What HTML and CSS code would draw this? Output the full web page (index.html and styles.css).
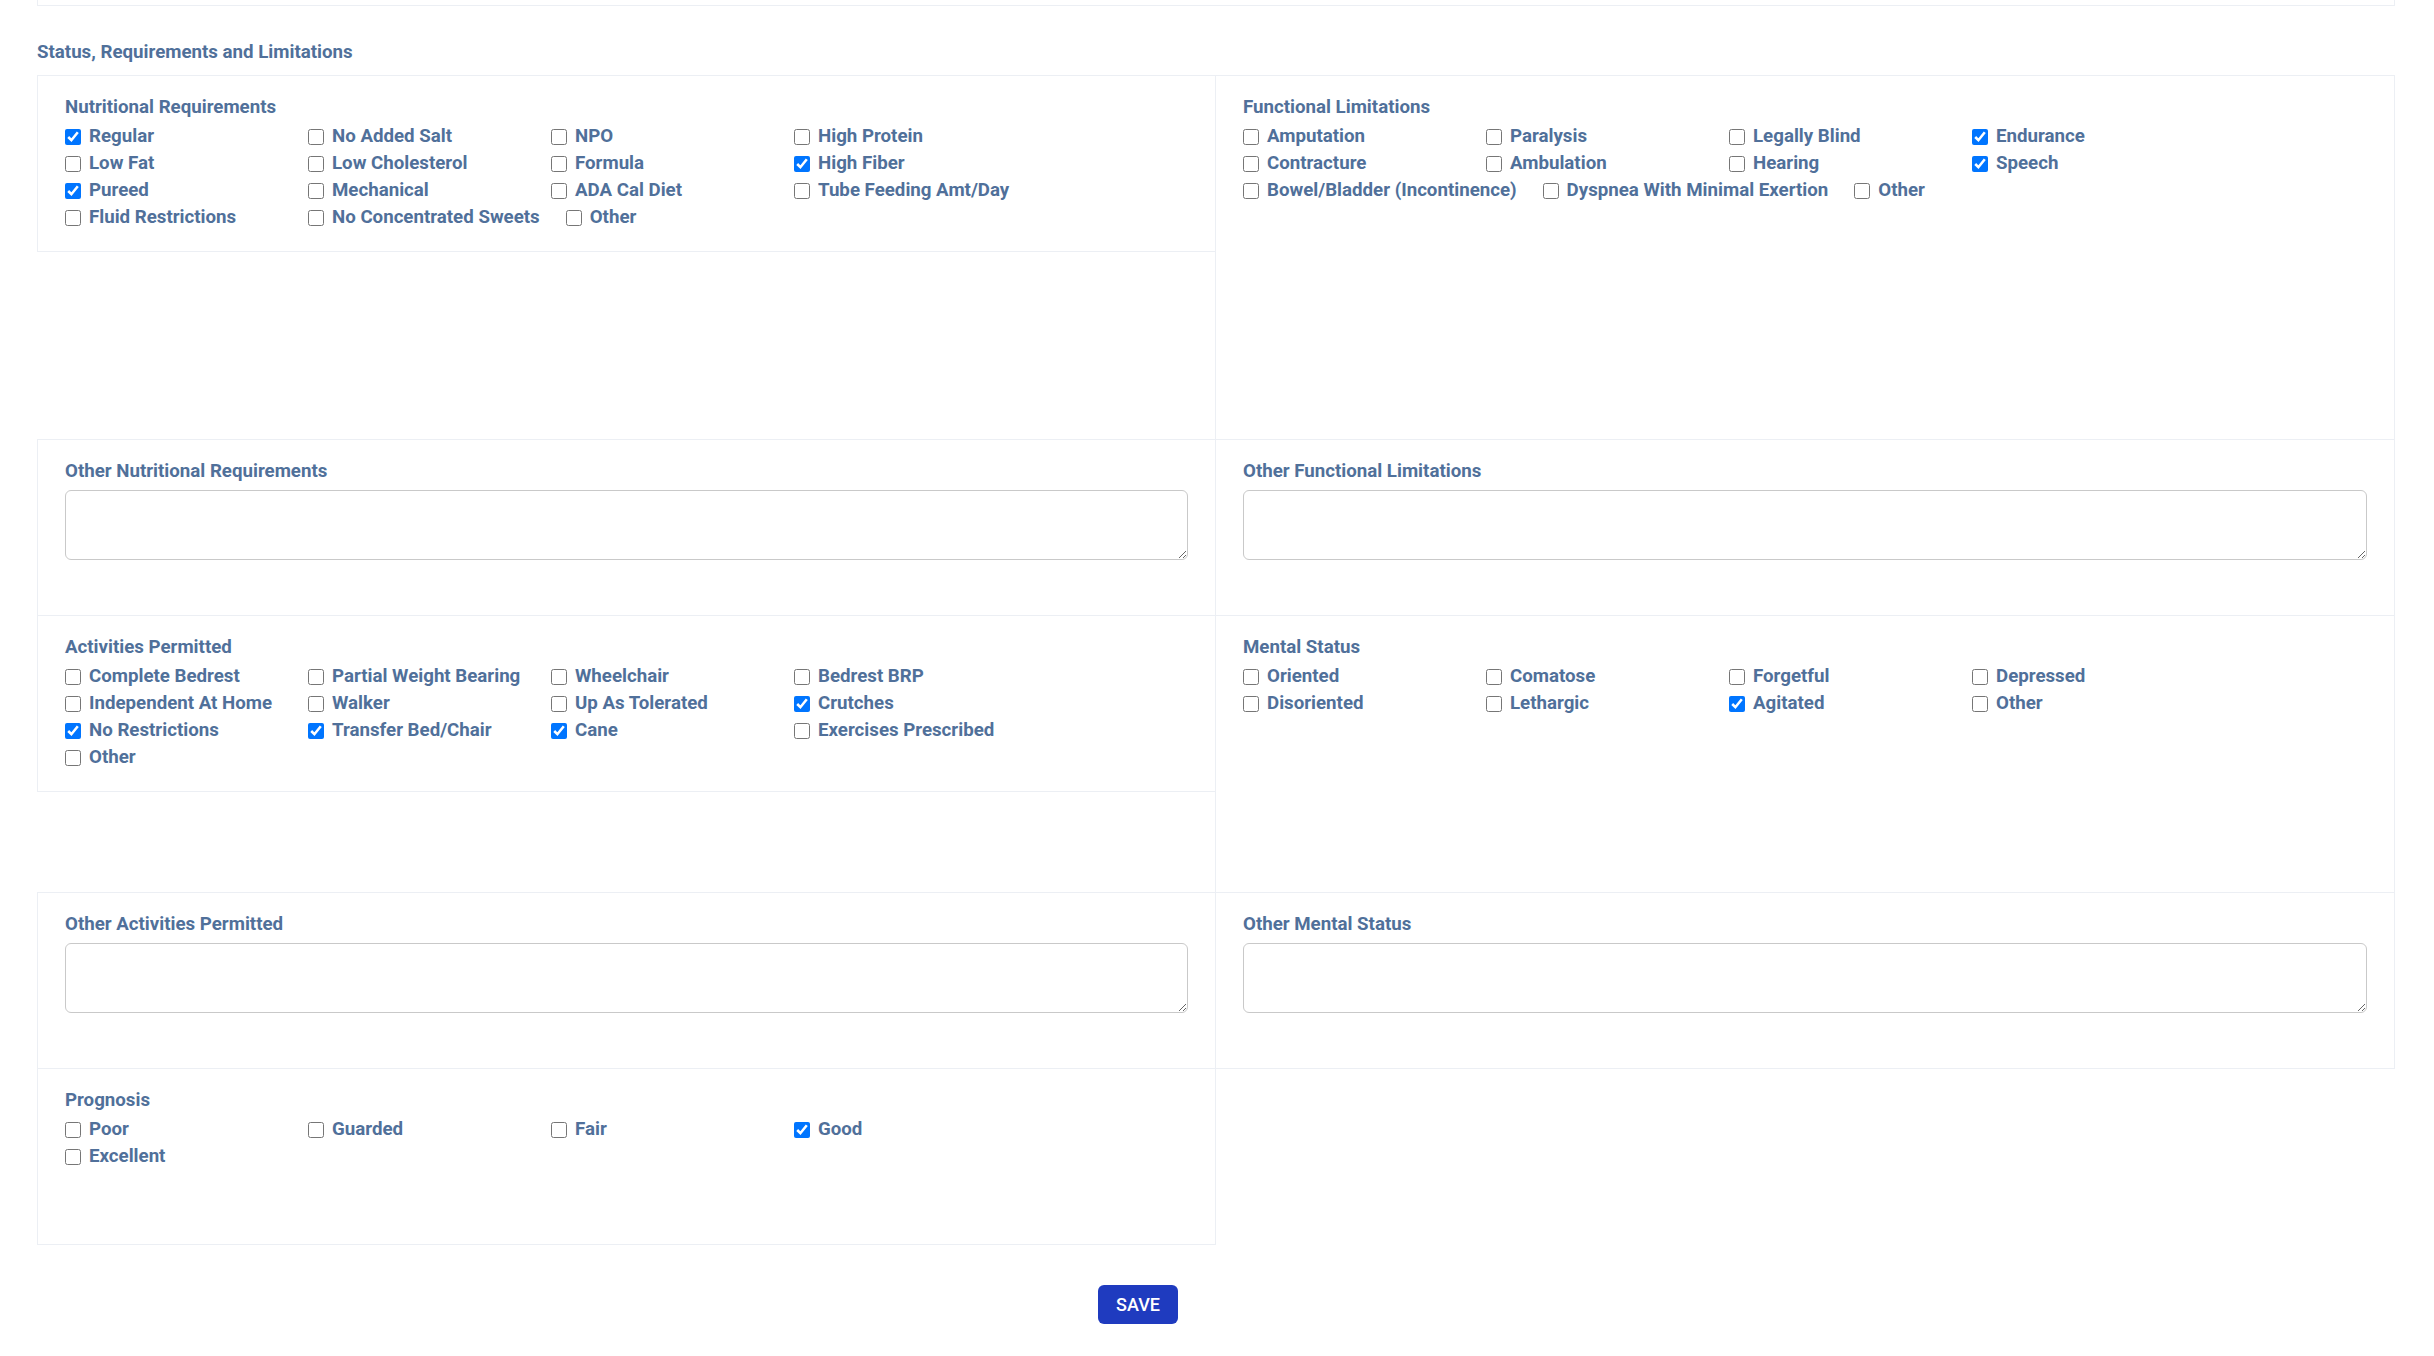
FILE: index.html
```html
<!DOCTYPE html>
<html>
<head>
<meta charset="utf-8">
<link rel="stylesheet" href="styles.css">
</head>
<body>
<div class="page">
  <div class="prev-card"></div>
  <h2 class="title">Status, Requirements and Limitations</h2>
  <div class="grid">
    <section class="card card-left">
      <div class="label">Nutritional Requirements</div>
      <div class="opts">
        <label class="opt"><input type="checkbox" checked><span>Regular</span></label>
        <label class="opt"><input type="checkbox"><span>No Added Salt</span></label>
        <label class="opt"><input type="checkbox"><span>NPO</span></label>
        <label class="opt"><input type="checkbox"><span>High Protein</span></label>
        <label class="opt"><input type="checkbox"><span>Low Fat</span></label>
        <label class="opt"><input type="checkbox"><span>Low Cholesterol</span></label>
        <label class="opt"><input type="checkbox"><span>Formula</span></label>
        <label class="opt"><input type="checkbox" checked><span>High Fiber</span></label>
        <label class="opt"><input type="checkbox" checked><span>Pureed</span></label>
        <label class="opt"><input type="checkbox"><span>Mechanical</span></label>
        <label class="opt"><input type="checkbox"><span>ADA Cal Diet</span></label>
        <label class="opt"><input type="checkbox"><span>Tube Feeding Amt/Day</span></label>
        <label class="opt"><input type="checkbox"><span>Fluid Restrictions</span></label>
        <label class="opt"><input type="checkbox"><span>No Concentrated Sweets</span></label>
        <label class="opt"><input type="checkbox"><span>Other</span></label>
      </div>
    </section>
    <section class="card card-right card-tall-a">
      <div class="label">Functional Limitations</div>
      <div class="opts">
        <label class="opt"><input type="checkbox"><span>Amputation</span></label>
        <label class="opt"><input type="checkbox"><span>Paralysis</span></label>
        <label class="opt"><input type="checkbox"><span>Legally Blind</span></label>
        <label class="opt"><input type="checkbox" checked><span>Endurance</span></label>
        <label class="opt"><input type="checkbox"><span>Contracture</span></label>
        <label class="opt"><input type="checkbox"><span>Ambulation</span></label>
        <label class="opt"><input type="checkbox"><span>Hearing</span></label>
        <label class="opt"><input type="checkbox" checked><span>Speech</span></label>
        <label class="opt"><input type="checkbox"><span>Bowel/Bladder (Incontinence)</span></label>
        <label class="opt"><input type="checkbox"><span>Dyspnea With Minimal Exertion</span></label>
        <label class="opt"><input type="checkbox"><span>Other</span></label>
      </div>
    </section>

    <section class="card card-left card-row">
      <div class="label">Other Nutritional Requirements</div>
      <textarea class="text"></textarea>
    </section>
    <section class="card card-right card-row">
      <div class="label">Other Functional Limitations</div>
      <textarea class="text"></textarea>
    </section>

    <section class="card card-left card-row">
      <div class="label">Activities Permitted</div>
      <div class="opts">
        <label class="opt"><input type="checkbox"><span>Complete Bedrest</span></label>
        <label class="opt"><input type="checkbox"><span>Partial Weight Bearing</span></label>
        <label class="opt"><input type="checkbox"><span>Wheelchair</span></label>
        <label class="opt"><input type="checkbox"><span>Bedrest BRP</span></label>
        <label class="opt"><input type="checkbox"><span>Independent At Home</span></label>
        <label class="opt"><input type="checkbox"><span>Walker</span></label>
        <label class="opt"><input type="checkbox"><span>Up As Tolerated</span></label>
        <label class="opt"><input type="checkbox" checked><span>Crutches</span></label>
        <label class="opt"><input type="checkbox" checked><span>No Restrictions</span></label>
        <label class="opt"><input type="checkbox" checked><span>Transfer Bed/Chair</span></label>
        <label class="opt"><input type="checkbox" checked><span>Cane</span></label>
        <label class="opt"><input type="checkbox"><span>Exercises Prescribed</span></label>
        <label class="opt"><input type="checkbox"><span>Other</span></label>
      </div>
    </section>
    <section class="card card-right card-row card-tall-b">
      <div class="label">Mental Status</div>
      <div class="opts">
        <label class="opt"><input type="checkbox"><span>Oriented</span></label>
        <label class="opt"><input type="checkbox"><span>Comatose</span></label>
        <label class="opt"><input type="checkbox"><span>Forgetful</span></label>
        <label class="opt"><input type="checkbox"><span>Depressed</span></label>
        <label class="opt"><input type="checkbox"><span>Disoriented</span></label>
        <label class="opt"><input type="checkbox"><span>Lethargic</span></label>
        <label class="opt"><input type="checkbox" checked><span>Agitated</span></label>
        <label class="opt"><input type="checkbox"><span>Other</span></label>
      </div>
    </section>

    <section class="card card-left card-row">
      <div class="label">Other Activities Permitted</div>
      <textarea class="text"></textarea>
    </section>
    <section class="card card-right card-row">
      <div class="label">Other Mental Status</div>
      <textarea class="text"></textarea>
    </section>

    <section class="card card-left card-row">
      <div class="label">Prognosis</div>
      <div class="opts">
        <label class="opt"><input type="checkbox"><span>Poor</span></label>
        <label class="opt"><input type="checkbox"><span>Guarded</span></label>
        <label class="opt"><input type="checkbox"><span>Fair</span></label>
        <label class="opt"><input type="checkbox" checked><span>Good</span></label>
        <label class="opt"><input type="checkbox"><span>Excellent</span></label>
      </div>
    </section>
  </div>
  <div class="actions">
    <button class="save" type="button">SAVE</button>
  </div>
</div>
</body>
</html>
```
FILE: styles.css
```css
* { box-sizing: border-box; }
html, body { margin: 0; padding: 0; background: #ffffff; }
body {
  font-family: Roboto, "Liberation Sans", sans-serif;
  color: #50709a;
}
.page {
  padding-left: 37px;
  width: 2395px;
}
.prev-card {
  height: 6px;
  border: 1px solid #eceff4;
  border-top: none;
}
.title {
  margin: 0;
  padding-top: 35px;
  font-size: 18.7px;
  line-height: 22px;
  font-weight: 700;
  color: #50709a;
  margin-bottom: 12px;
}
.grid {
  display: grid;
  grid-template-columns: 1179px 1179px;
  align-items: start;
}
.card {
  border: 1px solid #eceff4;
  padding: 20px 27px 20px 27px;
  min-height: 177px;
  background: #fff;
}
.card-right { margin-left: -1px; }
.card-row { margin-top: -1px; }
.card-tall-a { min-height: 365px; }
.card-tall-b { min-height: 278px; }
.label {
  font-size: 18.7px;
  line-height: 22px;
  font-weight: 700;
  margin-bottom: 4px;
}
.opts {
  display: flex;
  flex-wrap: wrap;
}
.opt {
  display: flex;
  align-items: center;
  gap: 8px;
  min-width: 217px;
  margin-right: 26px;
  height: 27px;
  font-size: 18.7px;
  font-weight: 700;
  white-space: nowrap;
}
.opt input {
  width: 16px;
  height: 16px;
  margin: 3px 0 0 0;
  flex: none;
}
.text {
  display: block;
  width: 100%;
  height: 70px;
  margin-top: 8px;
  border: 1px solid #c9c9c9;
  border-radius: 6px;
  resize: vertical;
  font-family: inherit;
}
.actions {
  padding-left: 1061px;
  padding-top: 40px;
}
.save {
  width: 80px;
  height: 39px;
  border: none;
  border-radius: 6px;
  background: #1f3bbf;
  color: #ffffff;
  font-family: Roboto, "Liberation Sans", sans-serif;
  font-size: 18px;
  font-weight: 500;
  padding: 0;
}
```
